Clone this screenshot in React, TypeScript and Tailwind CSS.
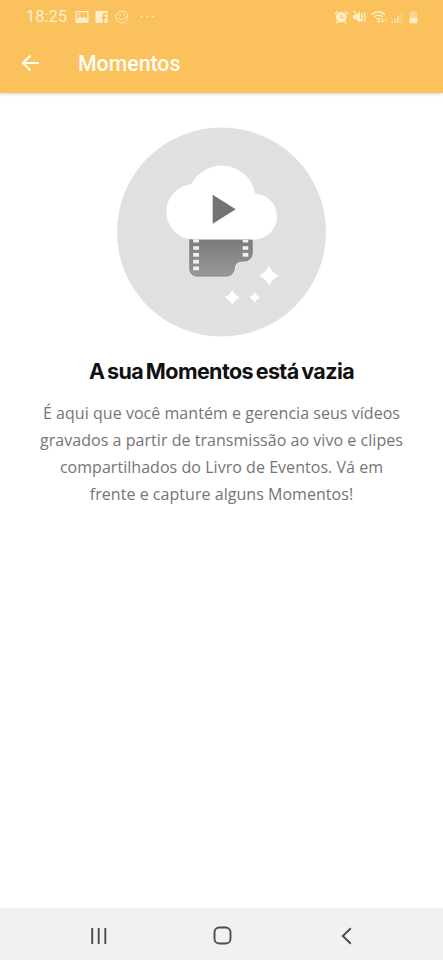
import type { ReactNode } from 'react';

const lines = [
  'É aqui que você mantém e gerencia seus vídeos',
  'gravados a partir de transmissão ao vivo e clipes',
  'compartilhados do Livro de Eventos. Vá em',
  'frente e capture alguns Momentos!',
];

const holes = [
  { y: 112.3, h: 2.7 },
  { y: 118.7, h: 3.6 },
  { y: 125.4, h: 3.8 },
  { y: 132.3, h: 3.8 },
  { y: 139, h: 3.8 },
];

interface StatusIconProps {
  width: number;
  className?: string;
  children: ReactNode;
}

const StatusIcon = ({ width, className = '', children }: StatusIconProps) => (
  <svg width={width} height={14} viewBox={`0 0 ${width} 14`} fill="none" className={`shrink-0 ${className}`}>
    {children}
  </svg>
);

const StatusBar = () => (
  <div className="flex h-[33px] items-center pl-[26px] pr-[25px] text-[#fff0c8]">
    <span className="w-[42px] whitespace-nowrap pt-px font-['Roboto'] text-[16.5px] leading-none">18:25</span>
    <StatusIcon width={14} className="ml-[7px]">
      <path
        fill="currentColor"
        fillRule="evenodd"
        d="M1.5 1h11a1 1 0 0 1 1 1v10a1 1 0 0 1-1 1h-11a1 1 0 0 1-1-1V2a1 1 0 0 1 1-1Zm.3 1.3v7.2L5 6.3l2.3 2 2-1.8 2.9 2.7V2.3H1.8Z"
      />
      <circle cx="4.3" cy="4.4" r="1" fill="currentColor" />
    </StatusIcon>
    <StatusIcon width={13} className="ml-[6px]">
      <path d="M.5 1h12v12H.5Z" fill="currentColor" />
      <path d="M11.500 3.600h-1.200c-1.200 0-1.700.6-1.700 1.700V13M6.300 7.600h4.900" stroke="#fbc15c" strokeWidth="1.700" />
    </StatusIcon>
    <StatusIcon width={14} className="ml-[7px]">
      <path
        d="M12.900 6.500A6 6 0 1 0 7.500 13M12.900 6.500c.2 3-2.400 6.200-5.400 6.500M12.900 6.500c-2 .2-3.400 1-4 2.500"
        stroke="currentColor"
      />
      <path d="M3.800 7.500c.6 2.300 3.200 3 5 1.600M4 5.500l1-.8 1 .8M8 5.300l1-.8 1 .8" stroke="currentColor" />
    </StatusIcon>
    <StatusIcon width={15} className="ml-[11px]">
      <circle cx="1.500" cy="6.500" r="1" fill="currentColor" />
      <circle cx="7.300" cy="6.500" r="1" fill="currentColor" />
      <circle cx="13.100" cy="6.500" r="1" fill="currentColor" />
    </StatusIcon>

    <div className="ml-auto flex items-center">
      <StatusIcon width={15}>
        <circle cx="7.300" cy="7.300" r="5.300" fill="currentColor" />
        <path d="m.8 4.200 2.700-2.700M13.800 4.200l-2.700-2.700M3.800 11.500l-1.500 1.800M10.800 11.500l1.500 1.800" stroke="currentColor" strokeWidth="1.400" />
        <path d="M7.300 4.500v3.200h2.500" stroke="#fbc15c" strokeWidth="1.100" />
      </StatusIcon>
      <StatusIcon width={15} className="ml-[3px]">
        <path d="M1 5h2.800L8 1.500v11L3.800 9.200H1Z" fill="currentColor" />
        <path d="m1.300.7 8.500 11M10.500 3l-1 2 1 2-1 2 1 2M13.300 2l-1 2.500 1 2.500-1 2.500 1 2.500" stroke="currentColor" strokeWidth="1.200" />
      </StatusIcon>
      <StatusIcon width={17} className="ml-[4px]">
        <path d="M.8 4.800c3.700-4 9.600-4 13.200 0M3 7.200c2.600-2.600 6.200-2.600 8.800 0M5.200 9.500c1.400-1.300 3-1.300 4.400 0" stroke="currentColor" strokeWidth="1.400" />
        <circle cx="7.500" cy="11.500" r="1.200" fill="currentColor" />
        <path d="m10 10.500 1.400-2 1.400 2ZM13.200 9.500h2.800l-1.400 2ZM10 11h2.800l-1.400 2Z" fill="currentColor" />
      </StatusIcon>
      <StatusIcon width={12} className="ml-[3px]">
        <path d="M1.200 11v2M4 8.500V13M6.800 6v7" stroke="currentColor" strokeWidth="1.200" />
        <path d="M9.200 3.500V13M11.400 1.500V13" stroke="currentColor" strokeWidth="1.200" opacity=".4" />
      </StatusIcon>
      <StatusIcon width={9} className="ml-[6px]">
        <path d="M2.500 1h4v1H8.500v6h-8V2h2Z" fill="currentColor" opacity=".45" />
        <path d="M.5 8h8v4.500a.7.7 0 0 1-.7.700H1.200a.7.7 0 0 1-.7-.700Z" fill="currentColor" />
      </StatusIcon>
    </div>
  </div>
);

const EmptyIllustration = () => (
  <svg width={209} height={210} viewBox="0 -0.5 209 210">
    <defs>
      <linearGradient id="film" x1="0" y1="0" x2="0" y2="1">
        <stop offset="0" stopColor="#7b7b7b" />
        <stop offset="1" stopColor="#989898" />
      </linearGradient>
    </defs>
    <circle cx="104.500" cy="104.500" r="104.500" fill="#e0e0e0" />
    <path
      fill="url(#film)"
      stroke="#858585"
      strokeWidth="1"
      d="M72.800 112H135.200V126a7.500 7.500 0 0 1-7.500 7.500h-3a7.500 7.500 0 0 0-7.500 7.500a7.500 7.500 0 0 1-7.500 7.500H79.800a7 7 0 0 1-7-7Z"
    />
    {holes.map((hole) => (
      <rect key={hole.y} x="76.200" y={hole.y} width="5.800" height={hole.h} fill="#f0f0f0" />
    ))}
    {holes.slice(0, 3).map((hole) => (
      <rect key={hole.y} x="125.700" y={hole.y} width="5.600" height={hole.h} fill="#f0f0f0" />
    ))}
    <g fill="#fff">
      <circle cx="77" cy="84.300" r="27.700" />
      <circle cx="104.700" cy="72.300" r="34.200" />
      <circle cx="137" cy="89" r="23" />
      <rect x="77" y="80" width="60" height="32" />
      <path d="M152 138.300q3 7 10 10q-7 3-10 10q-3-7-10-10q7-3 10-10Z" />
      <path d="M115.300 162.500q2.500 5 7.500 7.500q-5 2.500-7.500 7.500q-2.500-5-7.500-7.500q5-2.500 7.500-7.500Z" />
      <path d="M137.700 164.500q1.700 3.800 5.500 5.500q-3.800 1.700-5.500 5.500q-1.700-3.800-5.500-5.500q3.800-1.700 5.500-5.500Z" />
    </g>
    <path d="M95.700 67.200 118.700 81.700 95.700 96.300Z" fill="#737373" />
  </svg>
);

const NavBar = () => (
  <nav className="flex h-[52px] items-center bg-[#f1f1f1] pt-[3px] text-[#4c4c4c]">
    <button className="ml-[90px]" aria-label="Recentes">
      <svg width={18} height={18} viewBox="0 0 18 18" stroke="currentColor" strokeWidth="1.900" className="block">
        <path d="M2.200 1v16M8.700 1v16M15.300 1v16" />
      </svg>
    </button>
    <button className="ml-[105px]" aria-label="Início">
      <svg width={19} height={19} viewBox="0 0 19 19" fill="none" stroke="currentColor" strokeWidth="1.900" className="block">
        <rect x="1.500" y="1.500" width="16" height="16" rx="4.800" />
      </svg>
    </button>
    <button className="ml-[108px]" aria-label="Voltar">
      <svg width={12} height={18} viewBox="0 0 12 18" fill="none" stroke="currentColor" strokeWidth="1.900" className="block">
        <path d="M10.800 1.200 2.800 9l8 7.800" />
      </svg>
    </button>
  </nav>
);

export default function App() {
  return (
    <div className="flex h-[960px] w-[443px] flex-col overflow-hidden bg-white">
      <header className="h-[93px] shrink-0 bg-[#fbc15c] shadow-[0_1px_3px_rgba(0,0,0,0.18)]">
        <StatusBar />
        <div className="flex h-[60px] items-center pl-[21px] text-[#fffdf5]">
          <svg width={19} height={18} viewBox="0 0 19 18" fill="none" stroke="currentColor" strokeWidth="2.100">
            <path d="M18 9H2.500M9.500 1.500 2 9l7.500 7.500" />
          </svg>
          <h1 className="ml-[38px] pt-[2px] font-['Roboto'] text-[21.3px] font-medium leading-none">Momentos</h1>
        </div>
      </header>

      <main className="flex flex-1 flex-col items-center pt-[34px]">
        <EmptyIllustration />
        <h2 className="mt-[19px] whitespace-nowrap font-['Inter'] text-[21.5px] font-bold leading-[30px] tracking-[-0.6px] [word-spacing:-1.8px] text-[#111]">
          A sua Momentos está vazia
        </h2>
        <div className="mt-[14px] text-center font-['Open_Sans'] text-[16px] leading-[27px] tracking-[0.04px] text-[#757575]">
          {lines.map((line) => (
            <p key={line} className="whitespace-nowrap">{line}</p>
          ))}
        </div>
      </main>

      <NavBar />
    </div>
  );
}
